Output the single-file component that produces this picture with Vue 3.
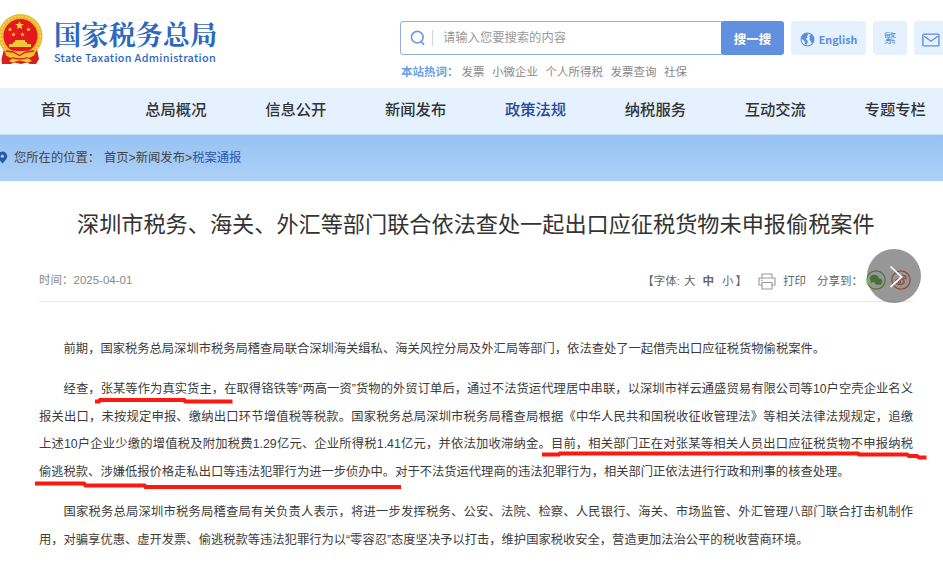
<template>
  <div class="page">
    <header class="header">
      <div class="brand">
        <svg class="emblem" viewBox="0 0 44 52" width="44" height="52">
          <path d="M5 35 L2.500 45 L3 50 L12 50 L15 48.500 L22 50 L28 48.500 L31 50 L37 50 L40 45 L38 35Z" fill="#d8201c" />
          <ellipse cx="21.5" cy="22" rx="22" ry="22" fill="#e9b92e" />
          <circle cx="21.5" cy="22" r="19.8" fill="none" stroke="#f6d95c" stroke-width="1.4" stroke-dasharray="2 1.6" />
          <circle cx="21.5" cy="22" r="17" fill="#e5191d" />
          <path :d="star(20.5, 11.5, 4.6)" fill="#fbd93c" />
          <path v-for="s in smallStars" :key="s[0]" :d="star(s[0], s[1], 2.3)" fill="#fbd93c" />
          <path d="M14 30v-2h2v-2h10v2h2v2h4v3H10v-3z" fill="#f3c832" />
          <path d="M5 34.5q7 3 16 2.500q10 .5 17-2.500l-3 7q-6 4-14 4t-14-4z" fill="#efc033" />
          <path d="M7 37l7 1 6.500 3.500 6.500-3.500 8-1" fill="none" stroke="#d8201c" stroke-width="1.300" />
          <path d="M10 47q5-5 11-2q7-3 12 2l-4 1.500-8-2-8 2z" fill="#f3c832" />
          <path d="M13 43.500q8 3 16 0" fill="none" stroke="#d8201c" stroke-width="1.300" />
        </svg>
        <div class="brand-text">
          <div class="brand-cn">国家税务总局</div>
          <div class="brand-en">State Taxation Administration</div>
        </div>
      </div>

      <div class="tools">
        <div class="tools-row">
          <div class="search">
            <svg class="search-icon" viewBox="0 0 16 16" width="16" height="16">
              <circle cx="7.3" cy="7.2" r="5.8" fill="none" stroke="#6b9be0" stroke-width="1.6" />
              <path d="M10.6 11l3.4 3.8" stroke="#6b9be0" stroke-width="1.8" />
            </svg>
            <span class="placeholder">请输入您要搜索的内容</span>
          </div>
          <button class="search-btn">搜一搜</button>
          <a class="tool english">
            <svg viewBox="0 0 16 16" width="15" height="15">
              <circle cx="8" cy="8" r="6.9" fill="#e5f1ff" stroke="#5b8edd" stroke-width="1.1" />
              <path d="M1.500 5L5 1.500 8 1.200 9 3 7.200 4.400 8.200 6 6 7.200 8.500 9.500 8 11.500 6.500 14.500 5.200 12 4.800 9.500 2 7.500Z" fill="#5b8edd" />
              <path d="M10.500 3L12.500 3 14.800 6.500 14.500 10 12.500 12.500 11.500 9.800 10 8 10.800 6 10 5Z" fill="#5b8edd" />
            </svg>
            <span>English</span>
          </a>
          <a class="tool trad">繁</a>
          <a class="tool mail">
            <svg viewBox="0 0 18 14" width="18" height="14">
              <rect x=".9" y="1.1" width="16" height="11.8" rx="1" fill="none" stroke="#5b8edd" stroke-width="1.4" />
              <path d="M2.2 3.2L9 8.2l6.7-5" fill="none" stroke="#5b8edd" stroke-width="1.3" />
            </svg>
          </a>
        </div>
        <div class="hot">
          <b>本站热词：</b>
          <a v-for="w in hotWords" :key="w">{{ w }}</a>
        </div>
      </div>
    </header>

    <nav class="nav">
      <a v-for="item in navItems" :key="item" :class="{ active: item === '政策法规' }">{{ item }}</a>
    </nav>

    <div class="crumb">
      <svg class="pin" viewBox="0 0 10 13" width="10" height="13">
        <path d="M2.600 .5a4.600 4.600 0 0 1 4.600 4.700C7.200 8 4.500 10 2.600 12.400 .7 10-2 8-2 5.200A4.600 4.600 0 0 1 2.600 .5z" fill="#2b57ab" />
        <circle cx="2.300" cy="5.200" r="1.600" fill="#a9cdf5" />
      </svg>
      <span class="crumb-label">您所在的位置：</span>
      <span>首页&gt;新闻发布&gt;<em>税案通报</em></span>
    </div>

    <main class="article">
      <h1>深圳市税务、海关、外汇等部门联合依法查处一起出口应征税货物未申报偷税案件</h1>
      <div class="meta">
        <span class="time">时间：2025-04-01</span>
        <div class="meta-right">
          <span class="fs">【字体:</span>
          <a class="fs-large">大</a>
          <a class="fs-mid">中</a>
          <a class="fs-small">小</a>
          <span class="fs-end">】</span>
          <svg class="printer" viewBox="0 0 18 17" width="18" height="17">
            <g fill="none" stroke="#999" stroke-width="1.1">
              <path d="M4 5V1h10v4M4 12H1V5h16v7h-3" />
              <path d="M4 9.500h10v6.500H4zM3 7.300h2" />
            </g>
          </svg>
          <a class="print">打印</a>
          <span class="share">分享到：</span>
          <svg class="social" viewBox="0 0 20 20" width="20" height="20">
            <circle cx="10" cy="10" r="9.200" fill="none" stroke="#55b82c" stroke-width="1.200" />
            <ellipse cx="8.300" cy="8.500" rx="4.500" ry="3.800" fill="#45a81c" />
            <path d="M5 11l-.6 2.500 2.800-1.500z" fill="#45a81c" />
            <ellipse cx="12.200" cy="11.500" rx="3.900" ry="3.200" fill="#45a81c" stroke="#8fbc7b" stroke-width=".5" />
            <path d="M13 14l2.200 1-.4-2z" fill="#45a81c" />
          </svg>
          <svg class="social weibo" viewBox="0 0 20 20" width="20" height="20">
            <g fill="none" stroke="#f0502a">
              <circle cx="10" cy="10" r="9.200" stroke-width="1.200" />
              <ellipse cx="8.800" cy="11.700" rx="4.300" ry="2.900" stroke-width="1.500" />
              <circle cx="8.500" cy="11.800" r="1.200" stroke-width="1.300" />
              <path d="M11.500 5.500q4-.6 3.500 4M11.700 7.600q1.800-.2 1.600 1.500" stroke-width="1.300" />
            </g>
          </svg>
        </div>
      </div>

      <div class="content">
        <p v-for="(lines, i) in paragraphs" :key="i">
          <span v-for="(line, j) in lines" :key="j" class="line" :class="{ indent: j === 0, full: j < lines.length - 1 }">{{ line }}</span>
        </p>
      </div>
    </main>

    <button class="next">
      <svg viewBox="0 0 54 54" width="54" height="54">
        <path d="M23.500 17.500L34.500 28 23.500 38" fill="none" stroke="#fff" stroke-width="1.700" />
      </svg>
    </button>

    <!-- 手绘红线标注 -->
    <svg class="marks" viewBox="0 0 943 565" width="943" height="565">
      <g fill="none" stroke="#fb1a10" stroke-width="4">
        <path d="M95 401.500h4l1-1.500h84l1.500 1.500h47" />
        <path d="M542 454.500h17l1-1h298l1 1h48l2 1.500h8l2 1.500h7.500" />
        <path d="M35 483.500h49l1.500 2h59l1 1.500H401" />
      </g>
    </svg>
  </div>
</template>

<script setup>
const hotWords = ['发票', '小微企业', '个人所得税', '发票查询', '社保']
const navItems = ['首页', '总局概况', '信息公开', '新闻发布', '政策法规', '纳税服务', '互动交流', '专题专栏']

const smallStars = [[11, 15.5], [14.5, 20.5], [23.5, 20.5], [29.5, 15.5]]

const paragraphs = [
  ['前期，国家税务总局深圳市税务局稽查局联合深圳海关缉私、海关风控分局及外汇局等部门，依法查处了一起借壳出口应征税货物偷税案件。'],
  [
    '经查，张某等作为真实货主，在取得铬铁等“两高一资”货物的外贸订单后，通过不法货运代理居中串联，以深圳市祥云通盛贸易有限公司等10户空壳企业名义',
    '报关出口，未按规定申报、缴纳出口环节增值税等税款。国家税务总局深圳市税务局稽查局根据《中华人民共和国税收征收管理法》等相关法律法规规定，追缴',
    '上述10户企业少缴的增值税及附加税费1.29亿元、企业所得税1.41亿元，并依法加收滞纳金。目前，相关部门正在对张某等相关人员出口应征税货物不申报纳税',
    '偷逃税款、涉嫌低报价格走私出口等违法犯罪行为进一步侦办中。对于不法货运代理商的违法犯罪行为，相关部门正依法进行行政和刑事的核查处理。'
  ],
  [
    '国家税务总局深圳市税务局稽查局有关负责人表示，将进一步发挥税务、公安、法院、检察、人民银行、海关、市场监管、外汇管理八部门联合打击机制作',
    '用，对骗享优惠、虚开发票、偷逃税款等违法犯罪行为以“零容忍”态度坚决予以打击，维护国家税收安全，营造更加法治公平的税收营商环境。'
  ]
]

// 五角星路径
function star(cx, cy, r) {
  const pts = []
  for (let i = 0; i < 10; i++) {
    const a = -Math.PI / 2 + (i * Math.PI) / 5
    const k = i % 2 ? r * 0.42 : r
    pts.push((cx + k * Math.cos(a)).toFixed(2) + ' ' + (cy + k * Math.sin(a)).toFixed(2))
  }
  return 'M' + pts.join('L') + 'Z'
}
</script>

<style>
body { background: #fff; overflow: hidden; }
</style>

<style scoped>
* { box-sizing: border-box; }
.page { position: relative; width: 943px; height: 565px; overflow: hidden; background: #fff; color: #3c3c3c; font-family: "Liberation Sans", "Noto Sans CJK SC", sans-serif; }
svg { display: block; flex: none; }
button { border: 0; padding: 0; font-family: inherit; }

.header { display: flex; height: 88px; }
.brand { display: flex; width: 400px; padding-top: 14px; }
.emblem { margin-left: -1px; }
.brand-text { margin-left: 11px; color: #2c68bd; white-space: nowrap; }
.brand-cn { font: 700 27.2px/37px "Noto Serif CJK SC", "Noto Sans CJK SC", serif; padding-top: 1px; }
.brand-en { font: 500 10.8px/14px "Noto Sans CJK SC", sans-serif; letter-spacing: .33px; margin-top: -2px; }

.tools { width: 543px; padding-top: 21px; }
.tools-row { display: flex; height: 35px; }
.tools-row > * { flex: none; }
.search { display: flex; align-items: center; width: 322px; height: 34px; border: 1px solid #8fb0e0; border-radius: 3px 0 0 3px; padding-left: 9px; }
.placeholder { height: 16px; margin-left: 6px; padding-left: 10px; border-left: 1px solid #d5d5d5; font-size: 12.3px; line-height: 17px; color: #999; }
.search-btn { width: 63px; height: 34px; margin-left: -1px; border-radius: 3px; background: #6090df; color: #fff; font-size: 12.5px; font-weight: bold; }
.tool { display: flex; align-items: center; justify-content: center; height: 34px; border-radius: 3px; background: #e5f1ff; color: #5b8edd; }
.english { width: 75px; margin-left: 7px; padding-top: 3px; gap: 4px; font: 700 10.7px "Noto Sans CJK SC", sans-serif; }
.trad { width: 34px; margin-left: 7px; padding-bottom: 2px; font-size: 12.5px; }
.mail { width: 34px; margin-left: 7px; padding-top: 3px; }
.hot { display: flex; height: 30px; line-height: 33px; font-size: 11.5px; color: #888; white-space: nowrap; }
.hot b { margin-left: 1px; margin-right: 3px; color: #6b9fe3; }
.hot a { margin-right: 7.5px; }

.nav { display: flex; height: 47px; background: #e5f1ff; border-bottom: 1px solid #c6def8; }
.nav a { flex: none; width: 119.9px; text-align: center; font-size: 15.3px; line-height: 44px; font-weight: 500; color: #333; }
.nav a:first-child { margin-left: -4px; }
.nav .active { color: #24499a; }

.crumb { display: flex; align-items: center; height: 46px; padding-bottom: 2px; background: linear-gradient(#96c2f2, #aed1f8); font-size: 12.3px; color: #444; white-space: nowrap; }
.crumb-label { width: 90px; margin-left: 4px; }
.crumb em { font-style: normal; color: #2b57ab; }

.article { padding: 0 29px 0 39px; }
h1 { margin: 0 0 0 38px; padding-top: 28px; font-size: 22.17px; line-height: 32px; font-weight: 400; white-space: nowrap; color: #333; }
.meta { display: flex; justify-content: space-between; width: 874px; height: 61px; border-bottom: 1px solid #e8e8e8; font-size: 11.5px; color: #888; }
.time { padding-top: 30px; }
.meta-right { display: flex; align-items: center; padding-top: 17px; color: #666; font-size: 11.5px; white-space: nowrap; }
.fs-large { margin-left: 4px; }
.fs-mid { margin-left: 7px; font-weight: bold; }
.fs-small { margin-left: 8px; }
.fs-end { margin-left: 2px; }
.printer { margin-left: 11px; margin-top: 3px; }
.print { margin-left: 7px; }
.share { margin-left: 11px; width: 49px; }
.weibo { margin-left: 5px; margin-right: 2px; }

.content { padding-top: 34px; width: 874px; font-size: 12.29px; line-height: 27.8px; }
.content p { margin: 0 0 12px; }
.line { display: block; white-space: nowrap; }
.indent { padding-left: 24.6px; }
.full { text-align: justify; text-align-last: justify; }

.next { position: absolute; left: 867px; top: 249px; width: 54px; height: 54px; border-radius: 50%; background: rgba(70, 70, 70, .56); }
.marks { position: absolute; left: 0; top: 0; pointer-events: none; }
</style>
